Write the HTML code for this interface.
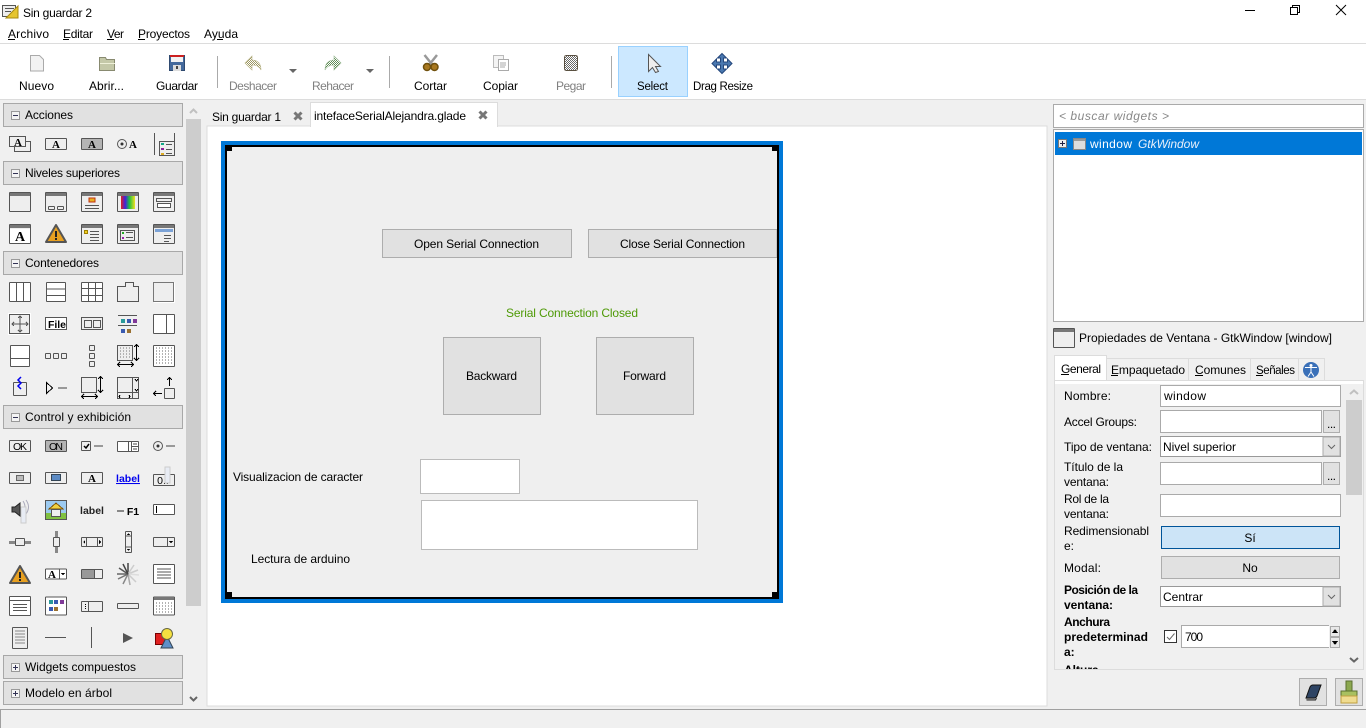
<!DOCTYPE html>
<html lang="es"><head><meta charset="utf-8"><title>Sin guardar 2</title>
<style>
html,body{margin:0;padding:0;background:#f0f0f0;overflow:hidden}
svg{display:block;font-family:"Liberation Sans",sans-serif;font-size:12px}
.s{fill:#eee;stroke:#555;stroke-width:1}
.w{fill:#fff;stroke:#555;stroke-width:1}
.l{stroke:#555;stroke-width:1;fill:none}
.g{stroke:#888;stroke-width:2;fill:none}
.k{stroke:#000;stroke-width:1;fill:none}
.hd{fill:#e1e1e1;stroke:#a8a8a8}
.en{fill:#fff;stroke:#aaa}
.bt{fill:#e1e1e1;stroke:#adadad}
.dis{fill:#808080}
.sm{font-size:11.5px}
</style></head><body>
<svg width="1366" height="728" viewBox="0 0 1366 728" xmlns="http://www.w3.org/2000/svg" shape-rendering="crispEdges">
<defs>
<linearGradient id="rb" x1="0" x2="1" y1="0" y2="0"><stop offset="0" stop-color="#e02020"/><stop offset=".3" stop-color="#4020e0"/><stop offset=".6" stop-color="#20c040"/><stop offset="1" stop-color="#f0e020"/></linearGradient>
<pattern id="dOl" width="2" height="2" patternUnits="userSpaceOnUse"><rect width="2" height="2" fill="#fff"/><rect width="1" height="1" fill="#9c9660"/><rect x="1" y="1" width="1" height="1" fill="#9c9660"/></pattern>
<pattern id="dGr" width="2" height="2" patternUnits="userSpaceOnUse"><rect width="2" height="2" fill="#fff"/><rect width="1" height="1" fill="#5c8a54"/><rect x="1" y="1" width="1" height="1" fill="#5c8a54"/></pattern>
<pattern id="dGy" width="2" height="2" patternUnits="userSpaceOnUse"><rect width="2" height="2" fill="#fff"/><rect width="1" height="1" fill="#666"/><rect x="1" y="1" width="1" height="1" fill="#666"/></pattern>
<symbol id="win" overflow="visible"><rect class="s" x="-10.5" y="-9.5" width="21" height="19" rx="1"/><rect x="-10" y="-9" width="20" height="3" fill="#777"/></symbol>
<symbol id="tri" overflow="visible"><path d="M0-9L10 8H-10Z" fill="#e8a020" stroke="#555" stroke-width="2" stroke-linejoin="round" shape-rendering="auto"/><rect x="-1" y="-3" width="2" height="6" fill="#222"/><rect x="-1" y="4" width="2" height="2" fill="#222"/></symbol>
</defs>

<!-- title bar, menu, toolbar -->
<rect width="1366" height="99" fill="#fff"/>
<rect y="43" width="1366" height="1" fill="#dcdcdc"/>
<rect y="99" width="1366" height="1" fill="#dcdcdc"/>
<rect x="2.500" y="5.500" width="13" height="11" fill="#eee" stroke="#555"/><rect x="5" y="8" width="9" height="1" fill="#555"/><rect x="5" y="11" width="6" height="1" fill="#555"/>
<path d="M6 18L18 6V18Z" fill="#e6c530" stroke="#a88a10" shape-rendering="auto"/>
<text x="23" y="17" textLength="69">Sin guardar 2</text>
<rect x="1245" y="10" width="10" height="1" fill="#000"/>
<path class="k" d="M1290.500 7.500h7v7h-7zM1292.500 7.500v-2h7v7h-2"/>
<path class="k" d="M1336 5l10 10M1346 5l-10 10" shape-rendering="auto"/>
<g>
<text x="8" y="38" textLength="41">Archivo</text><rect x="8" y="39" width="7" height="1"/>
<text x="63" y="38" textLength="30">Editar</text><rect x="63" y="39" width="6" height="1"/>
<text x="107" y="38" textLength="17">Ver</text><rect x="107" y="39" width="7" height="1"/>
<text x="138" y="38" textLength="52">Proyectos</text><rect x="138" y="39" width="7" height="1"/>
<text x="204" y="38" textLength="34">Ayuda</text><rect x="217" y="39" width="6" height="1"/>
</g>

<rect x="618.500" y="46.500" width="69" height="50" fill="#cce8ff" stroke="#99d1ff"/>
<g fill="#aaa"><rect x="217" y="56" width="1" height="32"/><rect x="389" y="56" width="1" height="32"/><rect x="611" y="56" width="1" height="32"/></g>
<text x="19" y="90" textLength="35">Nuevo</text>
<text x="89" y="90" textLength="35">Abrir...</text>
<text x="156" y="90" textLength="42">Guardar</text>
<text class="dis" x="229" y="90" textLength="48">Deshacer</text>
<text class="dis" x="312" y="90" textLength="42">Rehacer</text>
<text x="414" y="90" textLength="33">Cortar</text>
<text x="483" y="90" textLength="35">Copiar</text>
<text class="dis" x="556" y="90" textLength="30">Pegar</text>
<text class="sm" x="637" y="90" textLength="31">Select</text>
<text class="sm" x="693" y="90" textLength="60">Drag Resize</text>
<!-- toolbar icons -->
<path d="M30.500 55.500h9l4 4v11.500h-13z" fill="#f2f2f2" stroke="#aaa" shape-rendering="auto"/>
<path d="M99.500 57.500h6l1 2h8v11h-15z" fill="#c4c8a8" stroke="#888a70" shape-rendering="auto"/><rect x="100" y="63" width="15" height="1" fill="#eef0d8"/>
<rect x="169.500" y="55.500" width="15" height="15" fill="#44699c" stroke="#2f4a70"/><rect x="170" y="55" width="14" height="2" fill="#cc2020"/><rect x="171" y="57" width="12" height="5" fill="#f2f2f2"/><rect x="173" y="65" width="8" height="6" fill="#ddd"/><rect x="176" y="66" width="2" height="3" fill="#444"/>
<path d="M245 63l7-7v4c6 0 9 4 9 10c-2-4-5-5-9-5v5z" fill="url(#dOl)" stroke="#b8b488" stroke-width=".6" shape-rendering="auto"/>
<path d="M341 63l-7-7v4c-6 0-9 4-9 10c2-4 5-5 9-5v5z" fill="url(#dGr)" stroke="#9ab894" stroke-width=".6" shape-rendering="auto"/>
<path d="M289 69h8l-4 4zM366 69h8l-4 4z" fill="#666" shape-rendering="auto"/>
<path class="l" d="M424.500 55l8 10M437 55l-8 10" style="stroke:#999;stroke-width:2.500" shape-rendering="auto"/>
<circle cx="427" cy="67" r="3.500" fill="#a87820" stroke="#70500c" stroke-width="1.500" shape-rendering="auto"/><circle cx="434.500" cy="67" r="3.500" fill="#a87820" stroke="#70500c" stroke-width="1.500" shape-rendering="auto"/>
<rect x="493.500" y="55.500" width="10" height="12" fill="#f4f4f4" stroke="#bbb"/><rect x="498.500" y="59.500" width="10" height="11" fill="#fff" stroke="#aaa"/><path d="M500 63h6M500 65h6M500 67h5" stroke="#aaa"/>
<rect x="564.500" y="55.500" width="13" height="15" rx="2" fill="url(#dGy)" stroke="#5a5040"/>
<path d="M648.500 54.500v17l4-4 3 5 3-1-3-5h5z" fill="#eee" stroke="#555" shape-rendering="auto"/>
<path d="M722 53.500l4.500 4.500h-3v4h4v-3l4.500 4.500-4.500 4.500v-3h-4v4h3l-4.500 4.500-4.500-4.500h3v-4h-4v3l-4.500-4.500 4.500-4.500v3h4v-4h-3z" fill="#4a78b0" stroke="#24477c" shape-rendering="auto"/>

<!-- palette -->
<g>
<rect class="hd" x="3.500" y="103.500" width="179" height="23"/>
<rect class="hd" x="3.500" y="161.500" width="179" height="23"/>
<rect class="hd" x="3.500" y="251.500" width="179" height="23"/>
<rect class="hd" x="3.500" y="405.500" width="179" height="23"/>
<rect class="hd" x="3.500" y="655.500" width="179" height="23"/>
<rect class="hd" x="3.500" y="681.500" width="179" height="23"/>
<g fill="#f4f4f4" stroke="#999"><rect x="11.500" y="111.500" width="8" height="8"/><rect x="11.500" y="169.500" width="8" height="8"/><rect x="11.500" y="259.500" width="8" height="8"/><rect x="11.500" y="413.500" width="8" height="8"/><rect x="11.500" y="663.500" width="8" height="8"/><rect x="11.500" y="689.500" width="8" height="8"/></g>
<path stroke="#335" d="M13 115.500h5M13 173.500h5M13 263.500h5M13 417.500h5M13 667.500h5M13 693.500h5M15.500 665v5M15.500 691v5"/>
<text x="25" y="119" textLength="48">Acciones</text>
<text x="25" y="177" textLength="95">Niveles superiores</text>
<text x="25" y="267" textLength="74">Contenedores</text>
<text x="25" y="421" textLength="106">Control y exhibición</text>
<text x="25" y="671" textLength="111">Widgets compuestos</text>
<text x="25" y="697" textLength="87">Modelo en árbol</text>
</g>
<rect x="186" y="119" width="15" height="487" fill="#cdcdcd"/>
<path class="l" d="M190 113l3.500-3.500 3.500 3.500" style="stroke:#c0c0c0;stroke-width:2" shape-rendering="auto"/>
<path class="l" d="M190 697l3.500 3.500 3.500-3.500" style="stroke:#666;stroke-width:2" shape-rendering="auto"/>

<g style="font-family:'Liberation Serif',serif;font-weight:bold;font-size:11px" text-anchor="middle">
<!-- Acciones -->
<rect class="s" x="14.500" y="141.500" width="16" height="10"/><rect class="s" x="9.500" y="136.500" width="16" height="10"/><text x="18" y="146">A</text>
<rect class="s" x="45.500" y="138.500" width="21" height="11" rx="1"/><text x="56" y="148">A</text>
<rect x="81.500" y="138.500" width="21" height="11" rx="1" fill="#b4b4b4" stroke="#555"/><text x="92" y="148">A</text>
<circle cx="122" cy="144" r="4.500" class="s" shape-rendering="auto"/><circle cx="122" cy="144" r="1.500" fill="#333" shape-rendering="auto"/><text x="133" y="148">A</text>
<path class="l" d="M154.500 133v22M174.500 133v8"/><rect class="s" x="159.500" y="141.500" width="15" height="14"/><path d="M161 144h3" stroke="#1a8" stroke-width="2"/><path d="M161 149h3" stroke="#829" stroke-width="2"/><path d="M161 154h3" stroke="#da2" stroke-width="2"/><path class="l" d="M166 144.500h6M166 149.500h6M166 153.500h6"/>
<!-- Niveles 1 -->
<use href="#win" x="20" y="202"/>
<use href="#win" x="56" y="202"/><rect class="s" x="48.500" y="206.500" width="6" height="3" rx="1"/><rect class="s" x="57.500" y="206.500" width="6" height="3" rx="1"/>
<use href="#win" x="92" y="202"/><rect x="89" y="198" width="6" height="4" fill="#e8b020" stroke="#c03010"/><path class="l" d="M85 205.500h14M85 208.500h14"/>
<use href="#win" x="128" y="202"/><rect x="121" y="196" width="14" height="13" fill="url(#rb)"/>
<use href="#win" x="164" y="202"/><rect class="s" x="156.500" y="198.500" width="15" height="3"/><rect class="w" x="157.500" y="203.500" width="13" height="4"/>
<!-- Niveles 2 -->
<use href="#win" x="20" y="234"/><rect x="10" y="229" width="20" height="14" fill="#fff"/><text x="20" y="241" style="font-size:14px">A</text>
<use href="#tri" x="56" y="234"/>
<use href="#win" x="92" y="234"/><rect x="84.500" y="230.500" width="3" height="3" fill="#f0d020" stroke="#a08000"/><path class="l" d="M90 231.500h9M90 234.500h9M90 237.500h9M90 240.500h9"/>
<use href="#win" x="128" y="234"/><rect class="s" x="120.500" y="230.500" width="14" height="10"/><path d="M122 233h2" stroke="#2a2" stroke-width="2"/><path d="M122 238h2" stroke="#92a" stroke-width="2"/><path class="l" d="M126 232.500h7M126 237.500h7"/>
<use href="#win" x="164" y="234"/><rect x="155" y="229" width="18" height="3" fill="#7ba2d6"/><path class="l" d="M164 235.500h7M164 238.500h7M164 241.500h5"/>
<!-- Contenedores 1 -->
<rect class="w" x="9.500" y="282.500" width="21" height="19" rx="1"/><path class="l" d="M16.500 283v18M23.500 283v18"/>
<rect class="w" x="46.500" y="282.500" width="19" height="19" rx="1"/><path class="l" d="M47 289h18M47 295.500h18"/>
<rect class="w" x="81.500" y="282.500" width="21" height="19" rx="1"/><path class="l" d="M88.500 283v18M95.500 283v18M82 288.500h20M82 295.500h20"/>
<path class="s" d="M117.500 301.500v-15h8v-4h8v4h5v15z" style="fill:#eee" shape-rendering="auto"/>
<rect x="153.500" y="282.500" width="20" height="19" fill="#eee" stroke="#777"/><path d="M154 302.500h20.500v-20" fill="none" stroke="#fff"/>
<!-- Contenedores 2 -->
<rect x="8.500" y="313.500" width="22" height="21" fill="none" stroke="#fff"/><rect class="s" x="9.500" y="314.500" width="20" height="19"/><path class="l" d="M20 316v16M12 324h16M18 318l2-2 2 2M18 330l2 2 2-2M14 322l-2 2 2 2M26 322l2 2-2 2"/>
<rect class="w" x="45.500" y="317.500" width="21" height="12"/><text x="57" y="328" textLength="18" style="font-family:'Liberation Sans';font-size:10.500px">File</text>
<rect class="s" x="81.500" y="317.500" width="21" height="12"/><rect class="s" x="84.500" y="320.500" width="7" height="7"/><rect class="s" x="93.500" y="320.500" width="7" height="7"/>
<path class="l" d="M118 315.500h19M118 325.500h19"/><rect x="121" y="319" width="4" height="4" fill="#2a9a9a"/><rect x="127" y="319" width="4" height="4" fill="#3a5ab0"/><rect x="133" y="319" width="4" height="4" fill="#803a98"/><rect x="121" y="329" width="4" height="4" fill="#3a5ab0"/><rect x="127" y="329" width="4" height="4" fill="#9a7030"/>
<rect class="w" x="153.500" y="314.500" width="21" height="19" rx="1"/><path class="l" d="M166.500 315v18"/>
<!-- Contenedores 3 -->
<rect class="w" x="10.500" y="345.500" width="19" height="21" rx="1"/><path class="l" d="M11 358.500h18"/>
<g class="s"><rect x="45.500" y="353.500" width="5" height="5" rx="1"/><rect x="53.500" y="353.500" width="5" height="5" rx="1"/><rect x="61.500" y="353.500" width="5" height="5" rx="1"/><rect x="89.500" y="345.500" width="5" height="5" rx="1"/><rect x="89.500" y="353.500" width="5" height="5" rx="1"/><rect x="89.500" y="361.500" width="5" height="5" rx="1"/></g>
<rect class="s" x="117.500" y="345.500" width="15" height="15"/><path d="M120 348h11M120 351h11M120 354h11M120 357h11" stroke="#777" stroke-dasharray="1 2"/><path class="k" d="M136.500 345v15M134 347l2.500-2.500 2.500 2.500M134 358l2.500 2.500 2.500-2.500M118 364.500h15M120 362l-2.500 2.500 2.500 2.500M131 362l2.500 2.500-2.500 2.500"/>
<rect class="w" x="153.500" y="345.500" width="21" height="21" rx="1"/><path d="M156 348h16M156 351h16M156 354h16M156 357h16M156 360h16M156 363h16" stroke="#666" stroke-dasharray="1 2"/>
<!-- Contenedores 4 -->
<rect class="s" x="13.500" y="382.500" width="13" height="13" rx="1"/><path d="M21 377l-3 3 3 3-3 3 3 3" fill="none" stroke="#00e" stroke-width="1.500" shape-rendering="auto"/>
<path class="k" d="M46.500 382.500l6 5.500-6 5.500z"/><rect x="58" y="387" width="9" height="2" fill="#999"/>
<rect class="s" x="81.500" y="377.500" width="15" height="15"/><path class="k" d="M100.500 377v15M98 379l2.500-2.500 2.500 2.500M98 390l2.500 2.500 2.500-2.500M82 396.500h15M84 394l-2.500 2.500 2.500 2.500M95 394l2.500 2.500-2.500 2.500"/>
<rect class="s" x="117.500" y="377.500" width="21" height="21"/><path class="l" d="M132.500 378v20M118 392.500h21"/><path d="M135 379l1.500 2 1.500-2M135 389l1.500 2 1.500-2M120 395l-1 1.500 1 1.500M129 395l1 1.500-1 1.500" stroke="#000" fill="none"/>
<rect class="s" x="164.500" y="388.500" width="10" height="10" rx="1"/><path class="k" d="M169.500 386v-8M167 380l2.500-2.500 2.500 2.500M162 393.500h-8M156 391l-2.500 2.500 2.500 2.500"/>
<!-- Control 1 -->
<rect class="s" x="9.500" y="440.500" width="21" height="11" rx="1"/><text x="20" y="450" style="font-family:'Liberation Sans';font-weight:normal;font-size:10.500px" textLength="14">OK</text>
<rect x="45.500" y="440.500" width="21" height="11" rx="1" fill="#b4b4b4" stroke="#555"/><text x="56" y="450" style="font-family:'Liberation Sans';font-weight:normal;font-size:10.500px" textLength="14">ON</text>
<rect class="s" x="81.500" y="441.500" width="9" height="9" rx="1"/><path d="M84 446l2 2 3-4" stroke="#000" stroke-width="1.500" fill="none" shape-rendering="auto"/><rect x="94" y="445" width="9" height="2" fill="#999"/>
<rect class="w" x="117.500" y="441.500" width="21" height="10" rx="1"/><path class="l" d="M128.500 442v9M131.500 442v9M132 446.500h6"/><path d="M133 444h4M133 449h4" stroke="#444"/>
<circle class="s" cx="158" cy="446" r="4.500" shape-rendering="auto"/><circle cx="158" cy="446" r="1.500" fill="#333" shape-rendering="auto"/><rect x="166" y="445" width="9" height="2" fill="#999"/>
<!-- Control 2 -->
<rect class="s" x="9.500" y="472.500" width="21" height="11" rx="1"/><rect x="16.500" y="475.500" width="7" height="5" fill="#bbb" stroke="#666"/>
<rect class="s" x="45.500" y="472.500" width="21" height="11" rx="1"/><rect x="51.500" y="474.500" width="9" height="6" fill="#5b8ac4" stroke="#345"/>
<rect class="s" x="81.500" y="472.500" width="21" height="11" rx="1"/><text x="92" y="482">A</text>
<text x="128" y="482" fill="#0000ee" style="font-family:'Liberation Sans';font-size:10.500px;text-decoration:underline">label</text>
<rect class="s" x="153.500" y="474.500" width="21" height="11" rx="1"/><text x="163" y="484" style="font-family:'Liberation Sans';font-weight:normal;font-size:10.500px">0..</text><rect x="165" y="467" width="5" height="16" fill="#e8ecf4" stroke="#ccc"/>
<!-- Control 3 -->
<path d="M12 507h3l5-4v13l-5-4h-3z" fill="#555" stroke="#222" shape-rendering="auto"/><path d="M23 501q4 6 0 12M26 500q5 7 0 14" fill="none" stroke="#aab" shape-rendering="auto"/><rect x="21" y="507" width="5" height="16" fill="#e8ecf4" stroke="#ccc"/>
<rect x="45.500" y="500.500" width="21" height="19" fill="#9ccaf0" stroke="#555"/><rect x="46" y="513" width="20" height="6" fill="#80c040"/><path d="M56 503l7 6h-14z" fill="#f0d040" stroke="#805000"/><rect x="51.500" y="509.500" width="9" height="7" fill="#eee" stroke="#555"/>
<text x="92" y="514" fill="#222" style="font-family:'Liberation Sans';font-size:10.500px">label</text>
<rect x="117" y="510" width="7" height="2" fill="#888"/><text x="133" y="515" style="font-family:'Liberation Sans';font-size:10.500px">F1</text>
<rect class="w" x="153.500" y="504.500" width="21" height="10" rx="1"/><path class="k" d="M156.500 506v7"/>
<!-- Control 4 -->
<rect x="9" y="541" width="22" height="3" fill="#888"/><rect class="s" x="15.500" y="538.500" width="9" height="7" rx="1"/>
<rect x="55" y="531" width="3" height="22" fill="#888"/><rect class="s" x="53.500" y="537.500" width="6" height="9" rx="1"/>
<rect class="s" x="81.500" y="537.500" width="21" height="9" rx="1"/><path class="l" d="M86.500 538v8M97.500 538v8"/><path d="M85 540v4l-2-2zM99 540v4l2-2z" fill="#000"/>
<rect class="s" x="125.500" y="531.500" width="6" height="21" rx="1"/><path d="M126 536h5M126 547h5" stroke="#555"/><path d="M128.500 533l-1.500 2h3zM128.500 551l-1.500-2h3z" fill="#000"/>
<rect class="s" x="153.500" y="537.500" width="21" height="9" rx="1"/><path class="l" d="M167.500 538v8"/><path d="M169 541h4l-2 2.500z" fill="#000"/>
<!-- Control 5 -->
<use href="#tri" x="20" y="575"/>
<rect class="w" x="45.500" y="569" width="21" height="10" rx="1"/><path class="l" d="M59.500 569v10"/><text x="52" y="578">A</text><path d="M61 573h4l-2 2.500z" fill="#000"/>
<rect class="s" x="81.500" y="569.500" width="21" height="9" rx="1"/><rect x="82" y="570" width="13" height="8" fill="#999"/><path class="l" d="M94.500 570v8"/>
<g stroke-width="1.500" shape-rendering="auto" fill="none"><path d="M128 574l0-11" stroke="#444"/><path d="M128 574l6-9" stroke="#ccc"/><path d="M128 574l10-4" stroke="#ccc"/><path d="M128 574l11 1" stroke="#ddd"/><path d="M128 574l8 8" stroke="#ccc"/><path d="M128 574l2 11" stroke="#aaa"/><path d="M128 574l-5 10" stroke="#888"/><path d="M128 574l-10 5" stroke="#777"/><path d="M128 574l-11 0" stroke="#666"/><path d="M128 574l-9-6" stroke="#555"/><path d="M128 574l-5-10" stroke="#444"/></g>
<rect class="w" x="153.500" y="564.500" width="21" height="19" rx="1"/><path class="l" d="M157 569h14M157 572h14M157 575h14M157 578h14"/>
<!-- Control 6 -->
<rect class="w" x="9.500" y="596.500" width="21" height="19" rx="1"/><path class="l" d="M10 600.500h20M13 604.500h14M13 607.500h14M13 610.500h14"/>
<rect class="w" x="45.500" y="597" width="21" height="18" rx="1"/><rect x="49" y="600" width="4" height="4" fill="#2a9a9a"/><rect x="54" y="600" width="4" height="4" fill="#3a5ab0"/><rect x="60" y="600" width="4" height="4" fill="#803a98"/><rect x="49" y="607" width="4" height="4" fill="#3a5ab0"/><rect x="54" y="607" width="4" height="4" fill="#9a7030"/>
<rect class="s" x="81.500" y="601.500" width="21" height="10" rx="1"/><path class="l" d="M88.500 602v9"/><path d="M85.500 604v1M85.500 606v1M85.500 608v1" stroke="#000"/>
<rect class="s" x="117.500" y="603.500" width="21" height="5" rx="1"/>
<rect class="w" x="153.500" y="597" width="21" height="18" rx="1"/><rect x="154" y="597" width="20" height="3" fill="#777"/><path d="M156 603h16M156 606h16M156 609h16M156 612h16" stroke="#666" stroke-dasharray="1 2"/>
<!-- Control 7 -->
<rect class="s" x="12.500" y="627.500" width="15" height="21" rx="1"/><path d="M15 631h10M15 634h10M15 637h10M15 640h10M15 643h10" stroke="#888"/>
<rect x="45" y="637" width="21" height="1" fill="#555"/>
<rect x="91" y="627" width="1" height="21" fill="#555"/>
<path d="M123 633v10l10-5z" fill="#555"/>
<rect x="155.500" y="633.500" width="11" height="11" fill="#e02020" stroke="#700"/>
<path d="M167 636l-6 12h12z" fill="#6090c8" stroke="#345" shape-rendering="auto"/>
<circle cx="167" cy="634" r="5.500" fill="#f5e040" stroke="#664" shape-rendering="auto"/>
</g>

<!-- notebook -->
<rect x="207" y="126" width="840" height="580" fill="#fff" stroke="#dcdcdc"/>
<rect x="310.500" y="102.500" width="187" height="24" fill="#fff" stroke="#dcdcdc"/><rect x="311" y="126" width="186" height="1" fill="#fff"/>
<text x="212" y="121" textLength="69">Sin guardar 1</text>
<text x="314" y="120" textLength="152">intefaceSerialAlejandra.glade</text>
<path d="M294.500 112.500l7 7M301.500 112.500l-7 7M479.500 111.500l7 7M486.500 111.500l-7 7" stroke="#777" stroke-width="3" shape-rendering="auto"/>

<!-- designer -->
<rect x="221" y="141" width="562" height="462" fill="#0078d7"/>
<rect x="225" y="145" width="554" height="454" fill="#000"/>
<rect x="227" y="147" width="550" height="450" fill="#efefef"/>
<rect x="225" y="145" width="7" height="6" fill="#000"/><rect x="772" y="145" width="5" height="6" fill="#000"/><rect x="225" y="592" width="7" height="5" fill="#000"/><rect x="772" y="592" width="5" height="5" fill="#000"/>
<rect class="bt" x="382.500" y="229.500" width="189" height="28"/>
<path class="bt" d="M777 229.500h-188.500v28h188.500z" style="stroke-width:1"/>
<rect x="777" y="229" width="2" height="29" fill="#000"/>
<text x="414" y="248" textLength="125">Open Serial Connection</text>
<text x="620" y="248" textLength="125">Close Serial Connection</text>
<text x="506" y="317" textLength="132" fill="#4e9a06">Serial Connection Closed</text>
<rect class="bt" x="443.500" y="337.500" width="97" height="77"/>
<rect class="bt" x="596.500" y="337.500" width="97" height="77"/>
<text x="466" y="380" textLength="51">Backward</text>
<text x="623" y="380" textLength="43">Forward</text>
<text x="233" y="481" textLength="130">Visualizacion de caracter</text>
<rect x="420.500" y="459.500" width="99" height="34" fill="#fff" stroke="#bbb"/>
<rect x="421.500" y="500.500" width="276" height="49" fill="#fff" stroke="#bbb"/>
<text x="251" y="563" textLength="99">Lectura de arduino</text>

<!-- right panel -->
<rect x="1053.500" y="104.500" width="310" height="23" class="en"/>
<text x="1059" y="120" textLength="110" font-style="italic" fill="#888">&lt; buscar widgets &gt;</text>
<rect x="1053.500" y="129.500" width="310" height="192" class="en"/>
<rect x="1055" y="132" width="307" height="23" fill="#0078d7"/>
<rect x="1058.500" y="139.500" width="8" height="8" fill="#eee" stroke="#777"/><path d="M1060 143.500h5M1062.500 141v5" stroke="#224"/>
<rect x="1073.500" y="138.500" width="12" height="11" fill="#ddd" stroke="#888"/><rect x="1074" y="139" width="11" height="2" fill="#999"/>
<text x="1090" y="148" textLength="42" fill="#fff">window</text>
<text x="1138" y="148" textLength="61" font-style="italic" fill="#e8f0fa">GtkWindow</text>
<rect class="s" x="1053.500" y="328.500" width="21" height="19" rx="1"/><rect x="1054" y="329" width="20" height="3" fill="#777"/>
<text x="1079" y="342" textLength="253">Propiedades de Ventana - GtkWindow [window]</text>

<rect x="1054" y="380" width="310" height="1" fill="#dcdcdc"/>
<rect x="1106.500" y="358.500" width="218" height="22" fill="#f0f0f0" stroke="#dcdcdc"/>
<path d="M1188.500 358v22M1250.500 358v22M1298.500 358v22" stroke="#dcdcdc"/>
<rect x="1054.500" y="355.500" width="52" height="25" fill="#fff" stroke="#dcdcdc"/>
<rect x="1055" y="380" width="51" height="1" fill="#fff"/>
<rect x="1054.500" y="380.500" width="309" height="289" fill="#f0f0f0" stroke="#dcdcdc"/>
<rect x="1055" y="381" width="308" height="3" fill="#fff"/>
<text x="1061" y="373" textLength="40">General</text><rect x="1061" y="374" width="8" height="1"/>
<text x="1111" y="374" textLength="74">Empaquetado</text><rect x="1111" y="375" width="7" height="1"/>
<text x="1195" y="374" textLength="51">Comunes</text><rect x="1195" y="375" width="8" height="1"/>
<text class="sm" x="1256" y="374" textLength="39">Señales</text><rect x="1256" y="375" width="7" height="1"/>
<circle cx="1311" cy="370" r="8" fill="#3a70b8" shape-rendering="auto"/><circle cx="1311" cy="365.500" r="1.500" fill="#fff" shape-rendering="auto"/><path d="M1305 367.500h12M1311 368v4M1311 372l-3 4.500M1311 372l3 4.500" stroke="#fff" fill="none" shape-rendering="auto"/>
<rect x="1346" y="400" width="16" height="95" fill="#cdcdcd"/>
<path d="M1350 394l4-3.500 4 3.500" fill="none" stroke="#c0c0c0" stroke-width="2" shape-rendering="auto"/>
<path d="M1350 658l4 3.500 4-3.500" fill="none" stroke="#666" stroke-width="2" shape-rendering="auto"/>

<text x="1064" y="400" textLength="47">Nombre:</text>
<rect class="en" x="1160.500" y="385.500" width="180" height="21"/>
<text x="1164" y="400" textLength="42">window</text>
<text x="1064" y="426" textLength="73">Accel Groups:</text>
<rect class="en" x="1160.500" y="410.500" width="161" height="22"/><rect class="bt" x="1323.500" y="410.500" width="16" height="22"/><text x="1327" y="428" textLength="9">...</text>
<text x="1064" y="451" textLength="88">Tipo de ventana:</text>
<rect class="en" x="1160.500" y="436.500" width="180" height="20" style="stroke:#999"/><rect x="1323" y="437" width="17" height="19" fill="#e1e1e1" stroke="#aaa"/><path d="M1328 445l3.500 3.500 3.500-3.500" fill="none" stroke="#666" shape-rendering="auto"/>
<text x="1163" y="451" textLength="73">Nivel superior</text>
<text x="1064" y="471" textLength="59">Título de la</text><text x="1064" y="486" textLength="45">ventana:</text>
<rect class="en" x="1160.500" y="462.500" width="161" height="22"/><rect class="bt" x="1323.500" y="462.500" width="16" height="22"/><text x="1327" y="480" textLength="9">...</text>
<text x="1064" y="503" textLength="45">Rol de la</text><text x="1064" y="518" textLength="45">ventana:</text>
<rect class="en" x="1160.500" y="494.500" width="180" height="22"/>
<text x="1064" y="535" textLength="85">Redimensionabl</text><text x="1064" y="550">e:</text>
<rect x="1161.500" y="526.500" width="178" height="22" fill="#cce4f7" stroke="#005499"/><text x="1250" y="542" text-anchor="middle">Sí</text>
<text x="1064" y="572" textLength="37">Modal:</text>
<rect class="bt" x="1161.500" y="556.500" width="178" height="22"/><text x="1250" y="572" text-anchor="middle">No</text>
<g font-weight="bold"><text x="1064" y="594" textLength="74">Posición de la</text><text x="1064" y="609" textLength="49">ventana:</text>
<text x="1064" y="626" textLength="46">Anchura</text><text x="1064" y="641" textLength="84">predeterminad</text><text x="1064" y="656">a:</text></g>
<rect class="en" x="1160.500" y="586.500" width="180" height="20" style="stroke:#999"/><rect x="1323" y="587" width="17" height="19" fill="#e1e1e1" stroke="#aaa"/><path d="M1328 595l3.500 3.500 3.500-3.500" fill="none" stroke="#666" shape-rendering="auto"/>
<text x="1163" y="601" textLength="40">Centrar</text>
<rect x="1164.500" y="630.500" width="12" height="12" fill="#fff" stroke="#333"/><path d="M1167 637l2.500 2.500 5-6" fill="none" stroke="#666" shape-rendering="auto"/>
<path d="M1329 625.500h-147.500v22h147.500" fill="#fff" stroke="#aaa"/><text x="1185" y="641" textLength="18">700</text>
<rect x="1330.500" y="626.500" width="9" height="10" fill="#e8e8e8" stroke="#aaa"/><rect x="1330.500" y="637.500" width="9" height="10" fill="#e8e8e8" stroke="#aaa"/><path d="M1335 629l-3 4h6zM1335 645l-3-4h6z" fill="#000"/>
<svg x="1060" y="660" width="100" height="9"><text x="4" y="14" font-weight="bold">Altura</text></svg>

<rect class="bt" x="1299.500" y="678.500" width="27" height="27"/>
<path d="M1306 698l4-11q1-2 3-2h8l-4 11q-1 2-3 2z" fill="#2e4464" stroke="#111" shape-rendering="auto"/><path d="M1306 699h9" stroke="#aaa"/><path d="M1306.500 700h9l1-2" fill="none" stroke="#222" shape-rendering="auto"/>
<rect class="bt" x="1335.500" y="678.500" width="27" height="27"/>
<rect x="1346" y="681" width="6" height="10" fill="#8ca850" stroke="#5a7030"/><rect x="1341" y="691" width="16" height="5" fill="#a8c060" stroke="#5a7030"/><rect x="1341" y="696" width="16" height="7" fill="#f0dc90" stroke="#c0a040"/>

<!-- status bar -->
<rect y="709" width="1366" height="1" fill="#a0a0a0"/>
<rect y="710" width="1" height="18" fill="#a0a0a0"/>
</svg>
</body></html>
